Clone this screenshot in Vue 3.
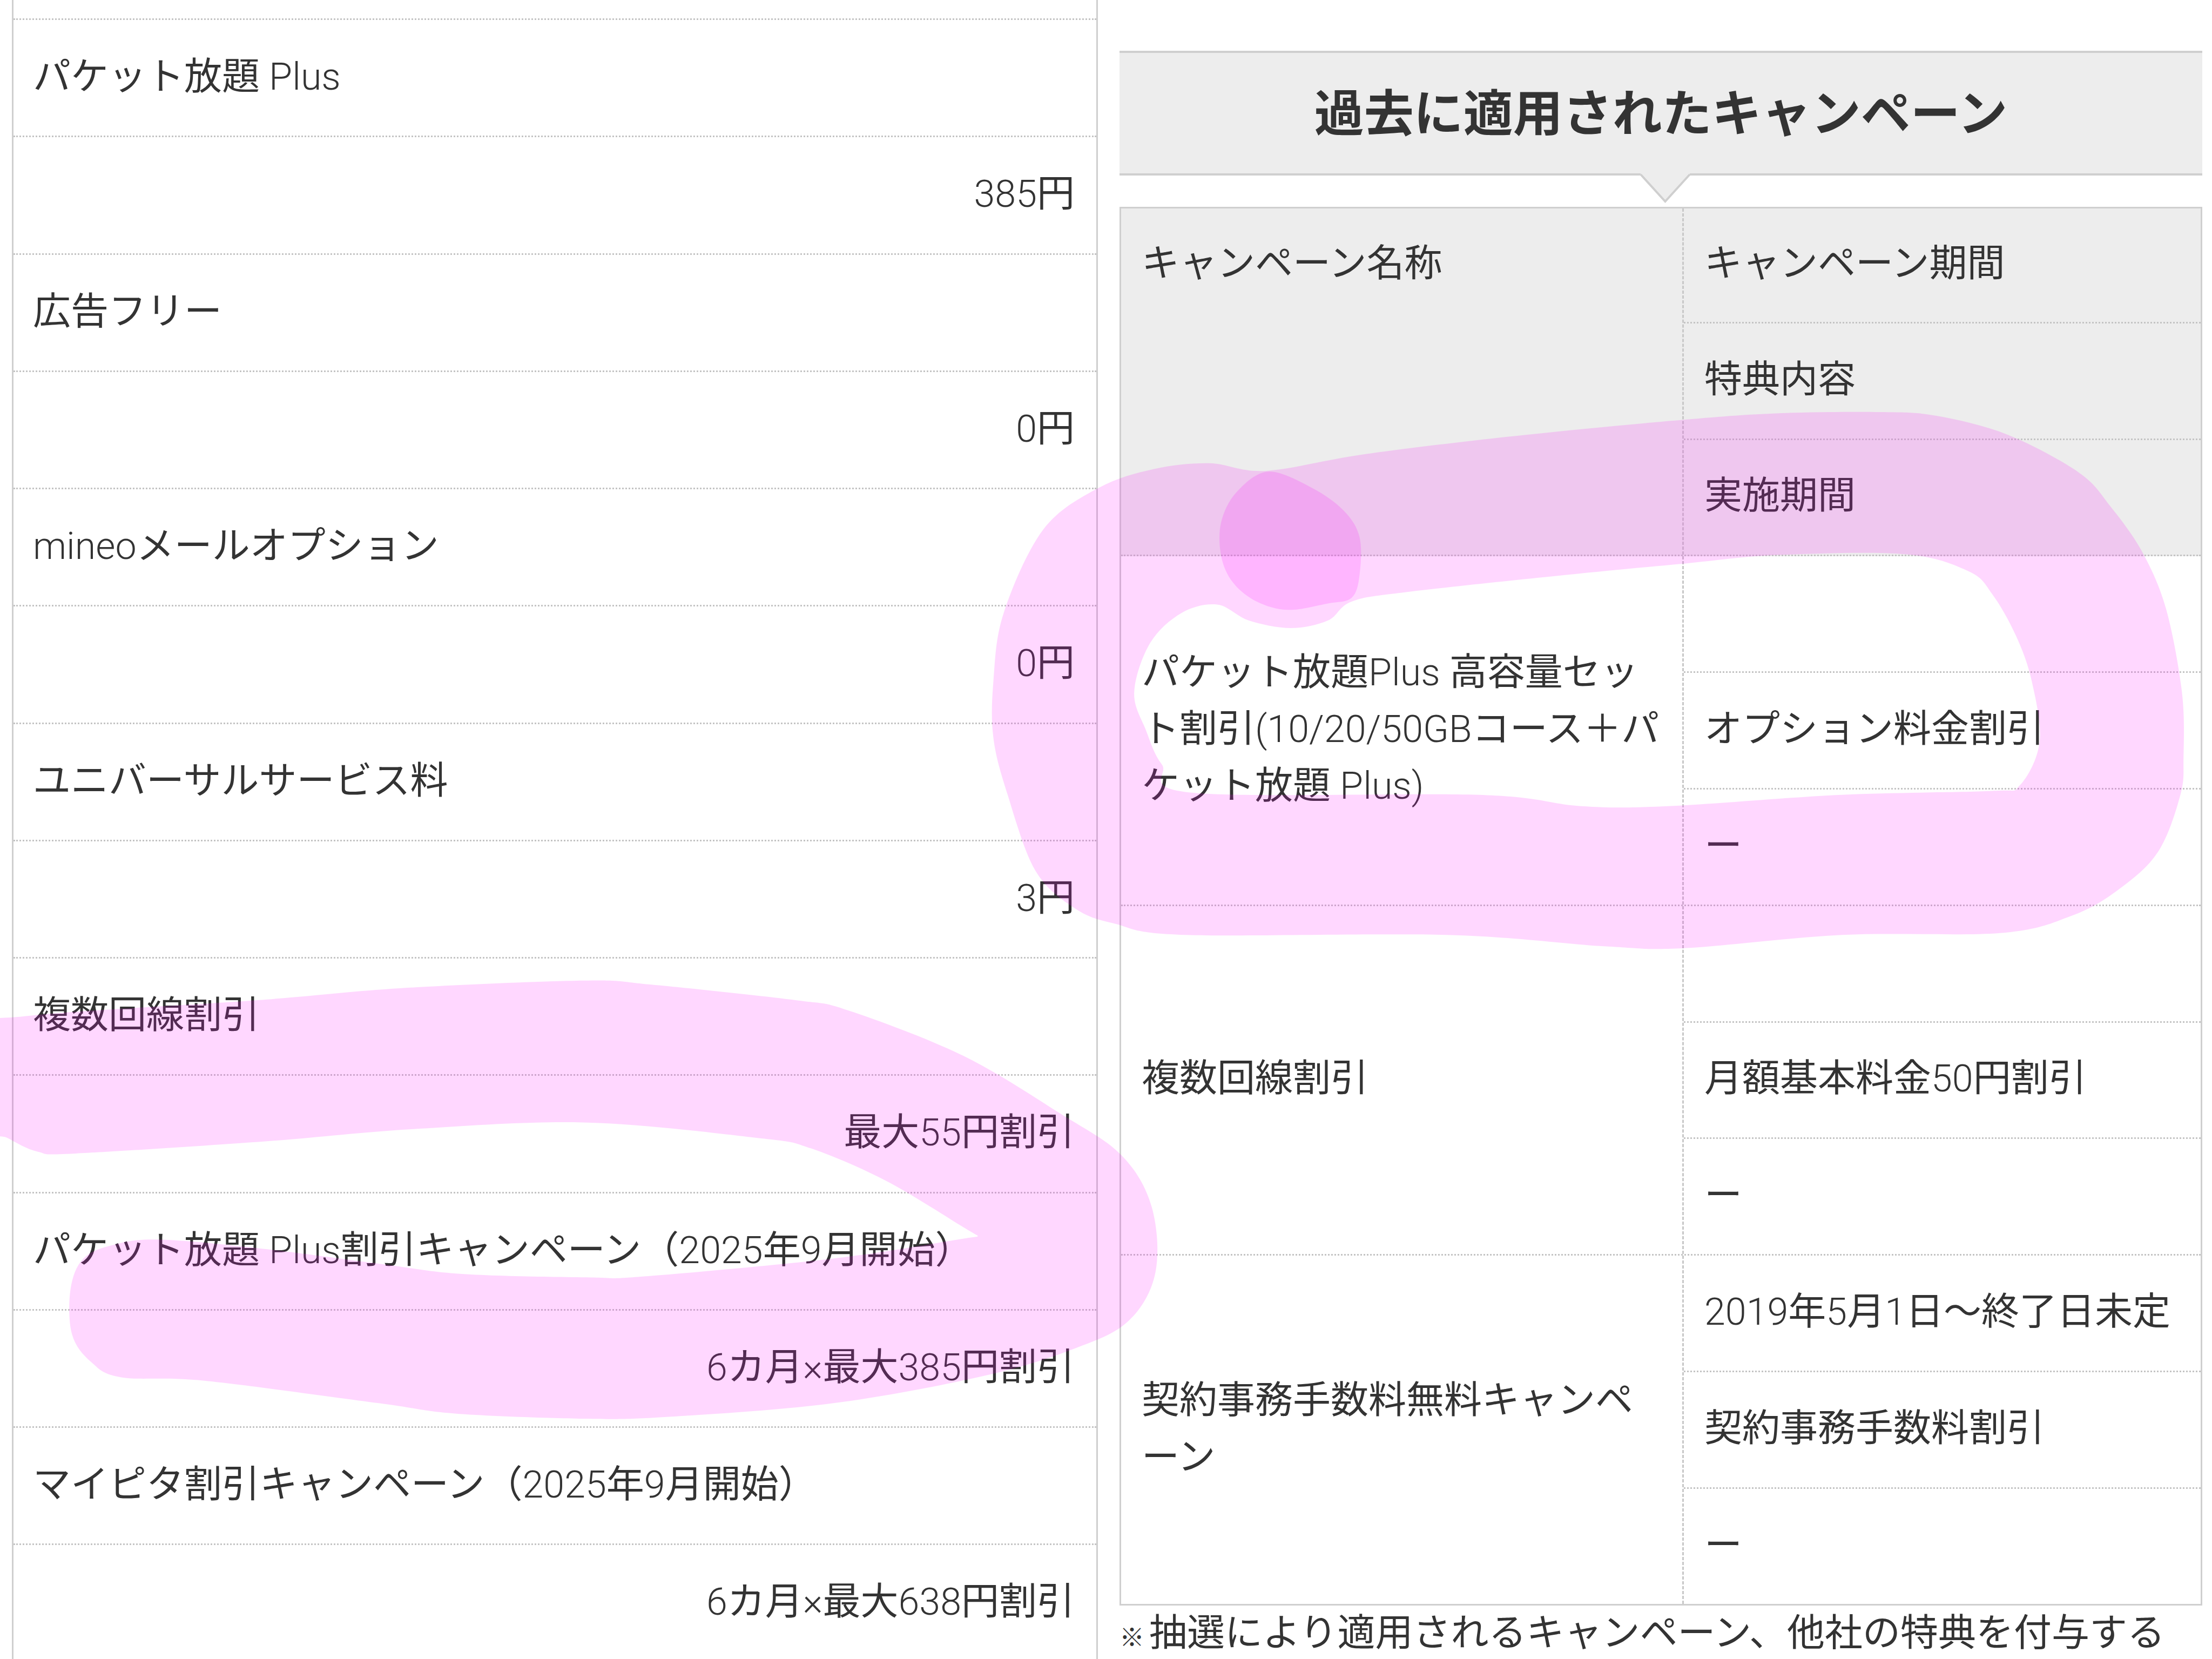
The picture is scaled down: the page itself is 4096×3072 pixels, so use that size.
<script setup>
const leftRows = [
  ['パケット放題 Plus', '385円'],
  ['広告フリー', '0円'],
  ['mineoメールオプション', '0円'],
  ['ユニバーサルサービス料', '3円'],
  ['複数回線割引', '最大55円割引'],
  ['パケット放題 Plus割引キャンペーン（2025年9月開始）', '6カ月×最大385円割引'],
  ['マイピタ割引キャンペーン（2025年9月開始）', '6カ月×最大638円割引'],
]

const campaigns = [
  {
    name: 'パケット放題Plus 高容量セット割引(10/20/50GBコース＋パケット放題 Plus)',
    details: ['', 'オプション料金割引', 'ー'],
  },
  { name: '複数回線割引', details: ['', '月額基本料金50円割引', 'ー'] },
  {
    name: '契約事務手数料無料キャンペーン',
    details: ['2019年5月1日〜終了日未定', '契約事務手数料割引', 'ー'],
  },
]

// Latin text is set in the lighter Roboto weight, Japanese stays regular.
function runs(text) {
  return text
    .split(/([0-9A-Za-z/()×. ]+)/)
    .filter(Boolean)
    .map((t) => ({ t, latin: /^[0-9A-Za-z/()×. ]+$/.test(t) }))
}

function smooth(points) {
  const n = points.length
  let d = `M${points[0][0].toFixed(1)} ${points[0][1].toFixed(1)}`
  for (let i = 0; i < n; i++) {
    const p0 = points[(i - 1 + n) % n]
    const p1 = points[i]
    const p2 = points[(i + 1) % n]
    const p3 = points[(i + 2) % n]
    const c1x = p1[0] + (p2[0] - p0[0]) / 6
    const c1y = p1[1] + (p2[1] - p0[1]) / 6
    const c2x = p2[0] - (p3[0] - p1[0]) / 6
    const c2y = p2[1] - (p3[1] - p1[1]) / 6
    d += `C${c1x.toFixed(1)} ${c1y.toFixed(1)} ${c2x.toFixed(1)} ${c2y.toFixed(1)} ${p2[0].toFixed(1)} ${p2[1].toFixed(1)}`
  }
  return d + 'Z'
}

const mapRight = (pts) => pts.map(([x, y]) => [x * 1.4643 + 1800, y * 0.7015 + 700])
const mapLeft = (pts) => pts.map(([x, y]) => [x * 1.403, y * 0.6378 + 1750])

const ringOuter = mapRight([
  [300, 225], [372, 245], [500, 200], [700, 150], [900, 110], [1020, 93], [1150, 90], [1220, 100],
  [1310, 150], [1400, 250], [1440, 340], [1480, 460], [1510, 610], [1530, 830], [1532, 1000],
  [1528, 1100], [1500, 1250], [1450, 1350], [1390, 1420], [1300, 1465], [1100, 1470], [900, 1505],
  [800, 1500], [600, 1470], [270, 1470], [180, 1440], [130, 1400], [80, 1300], [45, 1100],
  [27, 950], [27, 800], [40, 620], [90, 400], [160, 290], [230, 240],
])
const ringInner = mapRight([
  [310, 598], [350, 640], [403, 660], [450, 640], [480, 590], [550, 565], [750, 520], [900, 490],
  [1020, 467], [1180, 465], [1260, 510], [1290, 570], [1320, 680], [1340, 800], [1350, 960],
  [1325, 1075], [1290, 1090], [1100, 1100], [880, 1130], [770, 1130], [640, 1100], [280, 1095],
  [240, 1020], [220, 930], [205, 830], [225, 700], [265, 620],
])
const blob = mapRight([
  [375, 247], [430, 290], [470, 350], [490, 420], [490, 520], [480, 580], [450, 595], [400, 612],
  [360, 590], [330, 540], [315, 470], [315, 380], [335, 300],
])
const swoosh = mapLeft([
  [-20, 250], [40, 205], [340, 160], [530, 125], [770, 103], [860, 115], [1050, 160], [1120, 190],
  [1270, 320], [1400, 490], [1480, 610], [1520, 760], [1525, 950], [1490, 1090], [1420, 1170],
  [1300, 1250], [1100, 1330], [880, 1370], [770, 1375], [600, 1360], [500, 1330], [270, 1265],
  [160, 1255], [120, 1210], [95, 1130], [93, 1000], [110, 910], [150, 870], [210, 855], [340, 880],
  [500, 925], [610, 955], [780, 965], [850, 962], [1100, 910], [1270, 853], [1290, 845], [1278, 828],
  [1170, 685], [1070, 590], [1000, 560], [770, 515], [540, 535], [350, 570], [100, 605], [50, 600],
  [10, 560], [-20, 520],
])

const ringPath = smooth(ringOuter) + smooth(ringInner)
const blobPath = smooth(blob)
const swooshPath = smooth(swoosh)
</script>

<template>
  <div class="page">
    <section class="plan-list">
      <div class="row spacer"></div>
      <template v-for="r in leftRows" :key="r[0]">
        <div class="row">
          <span><span v-for="(s, i) in runs(r[0])" :key="i" :class="{ latin: s.latin }">{{ s.t }}</span></span>
        </div>
        <div class="row value">
          <span><span v-for="(s, i) in runs(r[1])" :key="i" :class="{ latin: s.latin }">{{ s.t }}</span></span>
        </div>
      </template>
    </section>

    <section class="history">
      <h2 class="heading">
        過去に適用されたキャンペーン
        <svg class="arrow" width="94" height="56" viewBox="0 0 94 56">
          <path d="M1 0 L1 2 L46.5 52 L92 2 L92 0 Z" fill="#ededed" />
          <path d="M1 2 L46.5 52 L92 2" fill="none" stroke="#cfcfcf" stroke-width="4" />
        </svg>
      </h2>
      <div class="table">
        <div class="group head">
          <div class="name top">キャンペーン名称</div>
          <div class="details">
            <div class="detail">キャンペーン期間</div>
            <div class="detail">特典内容</div>
            <div class="detail">実施期間</div>
          </div>
        </div>
        <div v-for="c in campaigns" :key="c.name" class="group">
          <div class="name">
            <span v-for="(s, i) in runs(c.name)" :key="i" :class="{ latin: s.latin }">{{ s.t }}</span>
          </div>
          <div class="details">
            <div v-for="(d, n) in c.details" :key="n" class="detail">
              <span><span v-for="(s, i) in runs(d)" :key="i" :class="{ latin: s.latin }">{{ s.t }}</span></span>
            </div>
          </div>
        </div>
      </div>
      <p class="note"><span class="mark">※</span>抽選により適用されるキャンペーン、他社の特典を付与する</p>
    </section>

    <svg class="marker" width="4096" height="3072" viewBox="0 0 4096 3072">
      <path :d="ringPath" fill-rule="evenodd" />
      <path :d="blobPath" />
      <path :d="swooshPath" />
    </svg>
  </div>
</template>

<style scoped>
.page {
  position: relative;
  width: 4096px;
  height: 3072px;
  overflow: hidden;
  display: flex;
  align-items: flex-start;
  background: #fff;
  color: #333;
  font-family: Roboto, "Noto Sans CJK JP", sans-serif;
  font-size: 70px;
  font-weight: 400;
  line-height: 1.5;
}
.latin {
  font-weight: 300;
}
.plan-list {
  box-sizing: border-box;
  flex: none;
  width: 2011px;
  margin-left: 22px;
  border-left: 3px solid #cfcfcf;
  border-right: 3px solid #cfcfcf;
  height: 3072px;
}
.row {
  box-sizing: border-box;
  height: 217.25px;
  padding: 0 40px 3px 36px;
  display: flex;
  align-items: center;
  border-bottom: 3px dotted #c4c4c4;
  white-space: nowrap;
}
.spacer {
  height: 37px;
}
.value {
  justify-content: flex-end;
}
.history {
  flex: none;
  width: 2005px;
  margin-left: 40px;
  padding-top: 94px;
}
.heading {
  position: relative;
  box-sizing: border-box;
  margin: 0;
  height: 231px;
  padding-top: 4px;
  display: flex;
  align-items: center;
  justify-content: center;
  background: #ededed;
  border-top: 4px solid #cfcfcf;
  border-bottom: 4px solid #cfcfcf;
  font-size: 92px;
  font-weight: 700;
}
.arrow {
  position: absolute;
  left: 964px;
  top: 223px;
}
.table {
  box-sizing: border-box;
  margin-top: 58px;
  width: 2005px;
  border: 3px solid #cfcfcf;
}
.group {
  display: grid;
  grid-template-columns: 1039px 1fr;
  border-bottom: 3px dotted #c4c4c4;
}
.group:last-child {
  border-bottom: none;
}
.head {
  background: #ededed;
}
.name {
  box-sizing: border-box;
  padding: 0 38px 4px;
  align-self: center;
  line-break: loose;
}
.top {
  align-self: start;
  padding-top: 50px;
}
.details {
  border-left: 3px dashed #c8c8c8;
}
.detail {
  box-sizing: border-box;
  height: 215.8px;
  padding: 0 38px 4px;
  display: flex;
  align-items: center;
  border-bottom: 3px dotted #c4c4c4;
  white-space: nowrap;
}
.detail:last-child {
  height: 212.8px;
  border-bottom: none;
}
.head .detail:first-child {
  height: 212.8px;
}
.group:last-child .detail:last-child {
  height: 213.7px;
}
.note {
  margin: 16px 0 0;
  line-height: 70px;
  white-space: nowrap;
}
.mark {
  display: inline-block;
  width: 55px;
  font-size: 46px;
}
.marker {
  position: absolute;
  top: 0;
  left: 0;
  pointer-events: none;
}
.marker path {
  fill: #ff00ff;
  fill-opacity: 0.155;
}
</style>
